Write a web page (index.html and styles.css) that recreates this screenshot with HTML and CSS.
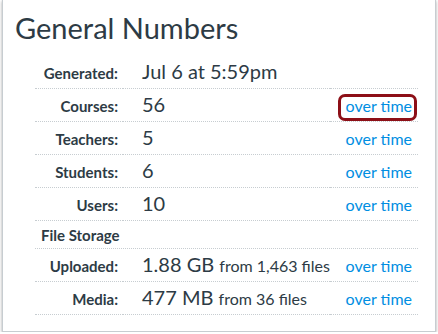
FILE: index.html
```html
<!DOCTYPE html>
<html>
<head>
<meta charset="utf-8">
<link rel="stylesheet" href="styles.css">
</head>
<body>
<div class="card">
  <h1 class="title">General Numbers</h1>
  <div class="stats">
    <div class="label">Generated:</div>
    <div class="value">Jul 6 at 5:59pm</div>
    <div class="link"></div>

    <div class="label">Courses:</div>
    <div class="value">56</div>
    <div class="link"><a href="#" class="highlight">over time</a></div>

    <div class="label">Teachers:</div>
    <div class="value">5</div>
    <div class="link"><a href="#">over time</a></div>

    <div class="label">Students:</div>
    <div class="value">6</div>
    <div class="link"><a href="#">over time</a></div>

    <div class="label">Users:</div>
    <div class="value">10</div>
    <div class="link"><a href="#">over time</a></div>

    <div class="section">File Storage</div>

    <div class="label">Uploaded:</div>
    <div class="value">1.88 GB <span class="sub">from 1,463 files</span></div>
    <div class="link"><a href="#">over time</a></div>

    <div class="label">Media:</div>
    <div class="value">477 MB <span class="sub">from 36 files</span></div>
    <div class="link"><a href="#">over time</a></div>
  </div>
</div>
</body>
</html>
```

FILE: styles.css
```css
html, body {
  margin: 0;
  padding: 0;
  background: #ffffff;
}
body {
  font-family: Lato, "Open Sans", sans-serif;
  color: #2d3b45;
}
.card {
  margin-left: 2px;
  width: 434px;
  box-sizing: border-box;
  border: 1px solid #c7cdd1;
  border-top: 0;
  box-shadow: 0 1px 3px rgba(0, 0, 0, 0.35);
  padding: 10px 0 16px 12px;
}
.title {
  margin: 0;
  font-size: 29px;
  font-weight: 400;
  line-height: 35px;
}
.stats {
  margin: 11px 0 0 20px;
  display: grid;
  grid-template-columns: 88px 207px 88px;
  grid-template-rows: repeat(5, 33px) 28px repeat(2, 33px);
  align-items: stretch;
}
.stats > div {
  box-sizing: border-box;
  border-bottom: 1px dotted #c7cdd1;
}
.label {
  text-align: right;
  padding: 8px 5px 0 0;
  font-size: 15px;
  line-height: 18px;
  font-weight: 700;
}
.value {
  padding: 3px 0 0 19px;
  font-size: 20px;
  line-height: 24px;
  white-space: nowrap;
}
.sub {
  font-size: 16px;
}
.link {
  text-align: right;
  padding: 7px 6px 0 0;
  font-size: 16px;
  line-height: 19px;
}
.link a {
  color: #008ee2;
  text-decoration: none;
}
.stats > .section {
  grid-column: 1 / 4;
  padding: 5px 0 0 6px;
  font-size: 15px;
  line-height: 18px;
  font-weight: 700;
}
.highlight {
  position: relative;
}
.highlight::after {
  content: "";
  position: absolute;
  left: -8px;
  right: -5px;
  top: -2px;
  bottom: -6px;
  border: 3px solid #8d0f17;
  border-radius: 7px;
}
```
